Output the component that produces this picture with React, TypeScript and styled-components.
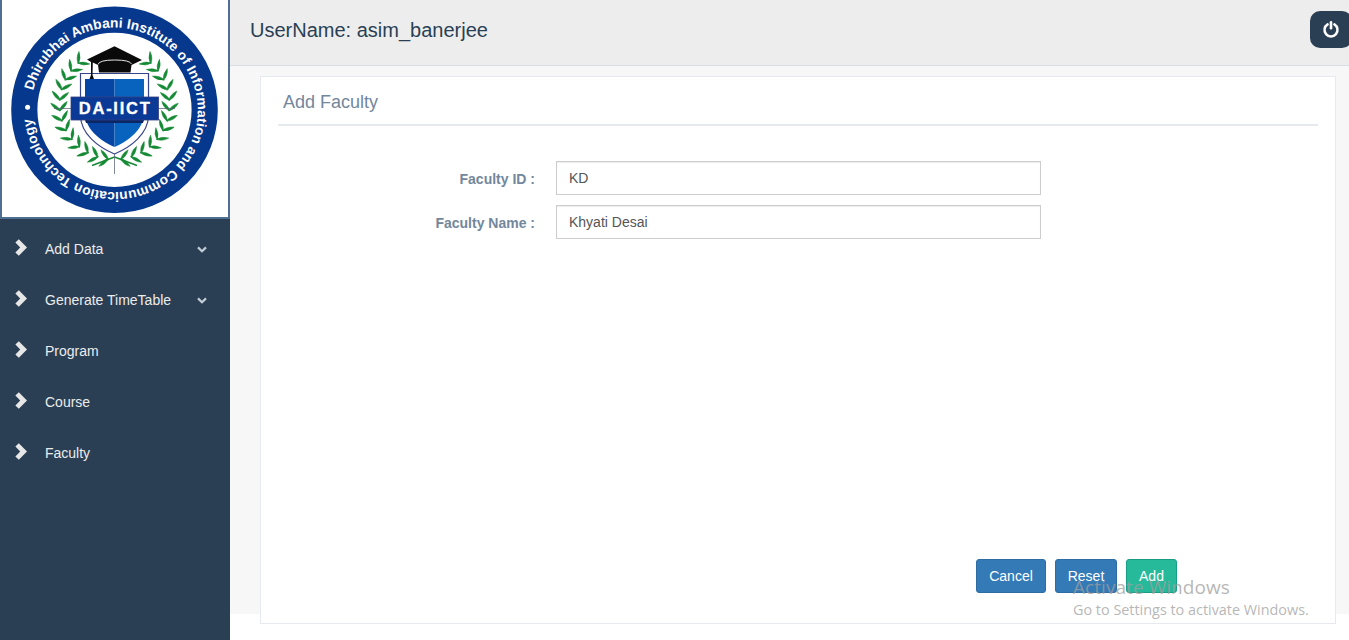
import React from "react";
import styled, { createGlobalStyle } from "styled-components";

const GlobalStyle = createGlobalStyle`
  *, *::before, *::after { box-sizing: border-box; }
  html, body { margin: 0; height: 100%; overflow: hidden; }
  body {
    background: #fff;
    color: #73879c;
    font-family: "Liberation Sans", Arial, sans-serif;
    font-size: 14px;
    line-height: 20px;
  }
`;

const Page = styled.div`
  display: flex;
  height: 640px;
  width: 100%;
  overflow: hidden;
`;

const Sidebar = styled.aside`
  flex: 0 0 230px;
  background: #2a3f54;
`;

const LogoFrame = styled.div`
  height: 219px;
  border: 2px solid #4e6e92;
  border-top: 0;
  background: #fff;
  svg { display: block; }
`;

const Menu = styled.nav`
  display: flex;
  flex-direction: column;
  padding-top: 4px;
`;

const MenuItem = styled.a`
  display: flex;
  align-items: center;
  height: 51px;
  padding: 0 23px 0 15px;
  color: #ececec;
`;

const MenuLabel = styled.span`
  flex: 1;
  margin-left: 18px;
  padding-top: 1px;
`;

const MenuArrow = styled.svg`
  margin-bottom: 3px;
`;

const Caret = styled.svg`
  margin-top: 2px;
`;

const Main = styled.main`
  flex: 1;
  min-width: 0;
  display: flex;
  flex-direction: column;
`;

const TopBar = styled.header`
  flex: 0 0 66px;
  display: flex;
  justify-content: space-between;
  padding: 11px 0 0 20px;
  background: #ededed;
  border-bottom: 1px solid #d9dee4;
  overflow: hidden;
`;

const UserName = styled.h1`
  margin: 8px 0 0;
  font-size: 20px;
  font-weight: 400;
  line-height: 22px;
  color: #2a3f54;
`;

const PowerButton = styled.button`
  width: 42px;
  height: 37px;
  margin-right: -3px;
  padding: 0 1px 1px 0;
  display: flex;
  align-items: center;
  justify-content: center;
  border: 0;
  border-radius: 10px;
  background: #2a3f54;
`;

const Content = styled.section`
  flex: 0 0 548px;
  height: 548px;
  padding: 10px 13px 0 30px;
  background: #f7f7f7;
`;

const Panel = styled.div`
  height: 548px;
  display: flex;
  flex-direction: column;
  padding: 10px 17px 30px;
  border: 1px solid #e6e9ed;
  background: #fff;
`;

const PanelTitle = styled.h2`
  margin: 0 0 35px;
  height: 39px;
  padding: 5px 5px 0;
  border-bottom: 2px solid #e6e9ed;
  font-size: 18px;
  font-weight: 400;
  line-height: 20px;
`;

const FormRow = styled.div`
  display: flex;
  align-items: center;
  gap: 21px;
  margin-bottom: 10px;
`;

const FieldLabel = styled.label`
  width: 257px;
  padding-top: 2px;
  text-align: right;
  font-weight: 700;
`;

const Field = styled.input`
  width: 485px;
  height: 34px;
  padding: 6px 12px;
  border: 1px solid #ccc;
  border-radius: 0;
  outline: 0;
  box-shadow: inset 0 1px 1px rgba(0, 0, 0, 0.075);
  color: #555;
  font: inherit;
`;

const Actions = styled.div`
  display: flex;
  justify-content: flex-end;
  gap: 9px;
  margin-top: auto;
  padding-right: 141px;
`;

const ActionButton = styled.button<{ $width: number; $tone: "primary" | "success" }>`
  width: ${(p) => p.$width}px;
  height: 34px;
  padding: 0;
  border: 1px solid ${(p) => (p.$tone === "primary" ? "#2e6da4" : "#169f85")};
  border-radius: 3px;
  background: ${(p) => (p.$tone === "primary" ? "#337ab7" : "#26b99a")};
  color: #fff;
  font: inherit;
`;

const Watermark = styled.div`
  position: absolute;
  left: 1073px;
  top: 574px;
  color: rgba(158, 158, 158, 0.75);
  font-family: "Open Sans", "Noto Sans", sans-serif;
  white-space: nowrap;
  pointer-events: none;
`;

const WatermarkTitle = styled.div`
  font-size: 19px;
  letter-spacing: 0.06px;
  line-height: 26px;
`;

const WatermarkText = styled.div`
  font-size: 14.4px;
  line-height: 19px;
`;

const CX = 114.5;
const CY = 109.8;

function pointOn(angle: number, r: number, cy = 104.5) {
  const a = (angle * Math.PI) / 180;
  return [CX + r * Math.cos(a), cy + r * Math.sin(a)];
}

// Leaf pairs follow the left branch from the bottom tie up to the cap.
const leafAngles = Array.from({ length: 13 }, (_, i) => 97 + i * 11);

function Branch() {
  return (
    <g fill="#158a35" stroke="#158a35" strokeWidth="0.5">
      {leafAngles.map((angle) => {
        const [x, y] = pointOn(angle, 55);
        const heading = angle + 90;
        return (
          <g key={angle} transform={`translate(${x} ${y}) rotate(${heading})`}>
            <path d="M-1 0Q5 -3.4 11.5 -0.8Q5 2.4 -1 0Z" transform="rotate(-42)" />
            <path d="M-1 0Q5 3.4 11.5 0.8Q5 -2.4 -1 0Z" transform="rotate(42)" />
          </g>
        );
      })}
      <path d="M114.5 157L92 165.5" strokeWidth="1.5" />
    </g>
  );
}

function Logo() {
  return (
    <svg width="226" height="217" viewBox="2 0 226 217">
      <circle cx={CX} cy={CY} r="90.2" fill="none" stroke="#06398d" strokeWidth="26.2" />
      <path
        id="ring"
        d="M33.2 90.8A83.5 83.5 0 0 1 195.8 128.8A83.5 83.5 0 0 1 33.2 90.8"
        fill="none"
      />
      <text
        fill="#fff"
        fontFamily="Liberation Sans, Arial, sans-serif"
        fontSize="13.7"
        fontWeight="700"
      >
        <textPath href="#ring" textLength="491" lengthAdjust="spacing">
          Dhirubhai Ambani Institute of Information and Communication Technology
        </textPath>
      </text>
      <circle cx="27.6" cy="107.3" r="2.5" fill="#fff" />
      <Branch />
      <g transform={`translate(${CX * 2} 0) scale(-1 1)`}>
        <Branch />
      </g>
      <path d="M54 108.5H175M114.5 150V174" stroke="#4f586f" strokeWidth="0.7" />
      <path
        d="M80.5 73.5H148.5V116C148 134 131 147 114.5 154C98 147 81 134 80.5 116Z"
        fill="#fff"
        stroke="#39458a"
        strokeWidth="1.2"
      />
      <path d="M85 79H114.5V147C99 140 85 129 85 112Z" fill="#0645a4" />
      <path d="M114.5 79H144V112C144 129 130 140 114.5 147Z" fill="#0763bd" />
      <path d="M85 120H144L143 123H86Z" fill="#092766" />
      <rect x="71" y="97" width="87.5" height="23" fill="#0b3a96" stroke="#344080" strokeWidth="0.8" />
      <text
        x="78.8"
        y="114"
        fill="#fff"
        stroke="#fff"
        strokeWidth="0.3"
        fontFamily="Liberation Sans, Arial, sans-serif"
        fontSize="16.5"
        fontWeight="700"
        textLength="71"
        lengthAdjust="spacing"
      >
        DA-IICT
      </text>
      <path d="M87 59.5L114.5 46.3L142 60L131.5 65L130.5 72.5H99L98 65L92.8 62.5L92.5 75L94 79H89.5L91 75V62Z" fill="#0a0a0a" />
      <path d="M98 64.5Q99 60 114.5 60Q130 60 131.5 64" fill="none" stroke="#e6e6e6" strokeWidth="1" />
    </svg>
  );
}

const menu = [
  { label: "Add Data", expandable: true },
  { label: "Generate TimeTable", expandable: true },
  { label: "Program", expandable: false },
  { label: "Course", expandable: false },
  { label: "Faculty", expandable: false },
];

export default function App() {
  return (
    <>
      <GlobalStyle />
      <Page>
        <Sidebar>
          <LogoFrame>
            <Logo />
          </LogoFrame>
          <Menu>
            {menu.map((item) => (
              <MenuItem key={item.label}>
                <MenuArrow width="12" height="17" viewBox="0 0 12 17">
                  <path d="M3.8 0.2L12 8.5L3.8 16.8L0.4 13.4L5.2 8.5L0.4 3.6Z" fill="#e7e7e7" />
                </MenuArrow>
                <MenuLabel>{item.label}</MenuLabel>
                {item.expandable && (
                  <Caret width="10" height="7" viewBox="0 0 10 7">
                    <path d="M1 1.4L5 5.2L9 1.4" fill="none" stroke="#c4cfda" strokeWidth="2.2" />
                  </Caret>
                )}
              </MenuItem>
            ))}
          </Menu>
        </Sidebar>
        <Main>
          <TopBar>
            <UserName>UserName: asim_banerjee</UserName>
            <PowerButton aria-label="Log out">
              <svg width="18" height="18" viewBox="0 0 18 18" fill="none" stroke="#fff" strokeLinecap="round">
                <path d="M5.6 4.4A6.5 6.5 0 1 0 12.4 4.4" strokeWidth="2.5" />
                <path d="M9 2.2V8.2" strokeWidth="2.6" />
              </svg>
            </PowerButton>
          </TopBar>
          <Content>
            <Panel>
              <PanelTitle>Add Faculty</PanelTitle>
              <FormRow>
                <FieldLabel htmlFor="faculty-id">Faculty ID :</FieldLabel>
                <Field id="faculty-id" defaultValue="KD" />
              </FormRow>
              <FormRow>
                <FieldLabel htmlFor="faculty-name">Faculty Name :</FieldLabel>
                <Field id="faculty-name" defaultValue="Khyati Desai" />
              </FormRow>
              <Actions>
                <ActionButton $width={70} $tone="primary">Cancel</ActionButton>
                <ActionButton $width={62} $tone="primary">Reset</ActionButton>
                <ActionButton $width={51} $tone="success">Add</ActionButton>
              </Actions>
            </Panel>
          </Content>
        </Main>
      </Page>
      <Watermark>
        <WatermarkTitle>Activate Windows</WatermarkTitle>
        <WatermarkText>Go to Settings to activate Windows.</WatermarkText>
      </Watermark>
    </>
  );
}
